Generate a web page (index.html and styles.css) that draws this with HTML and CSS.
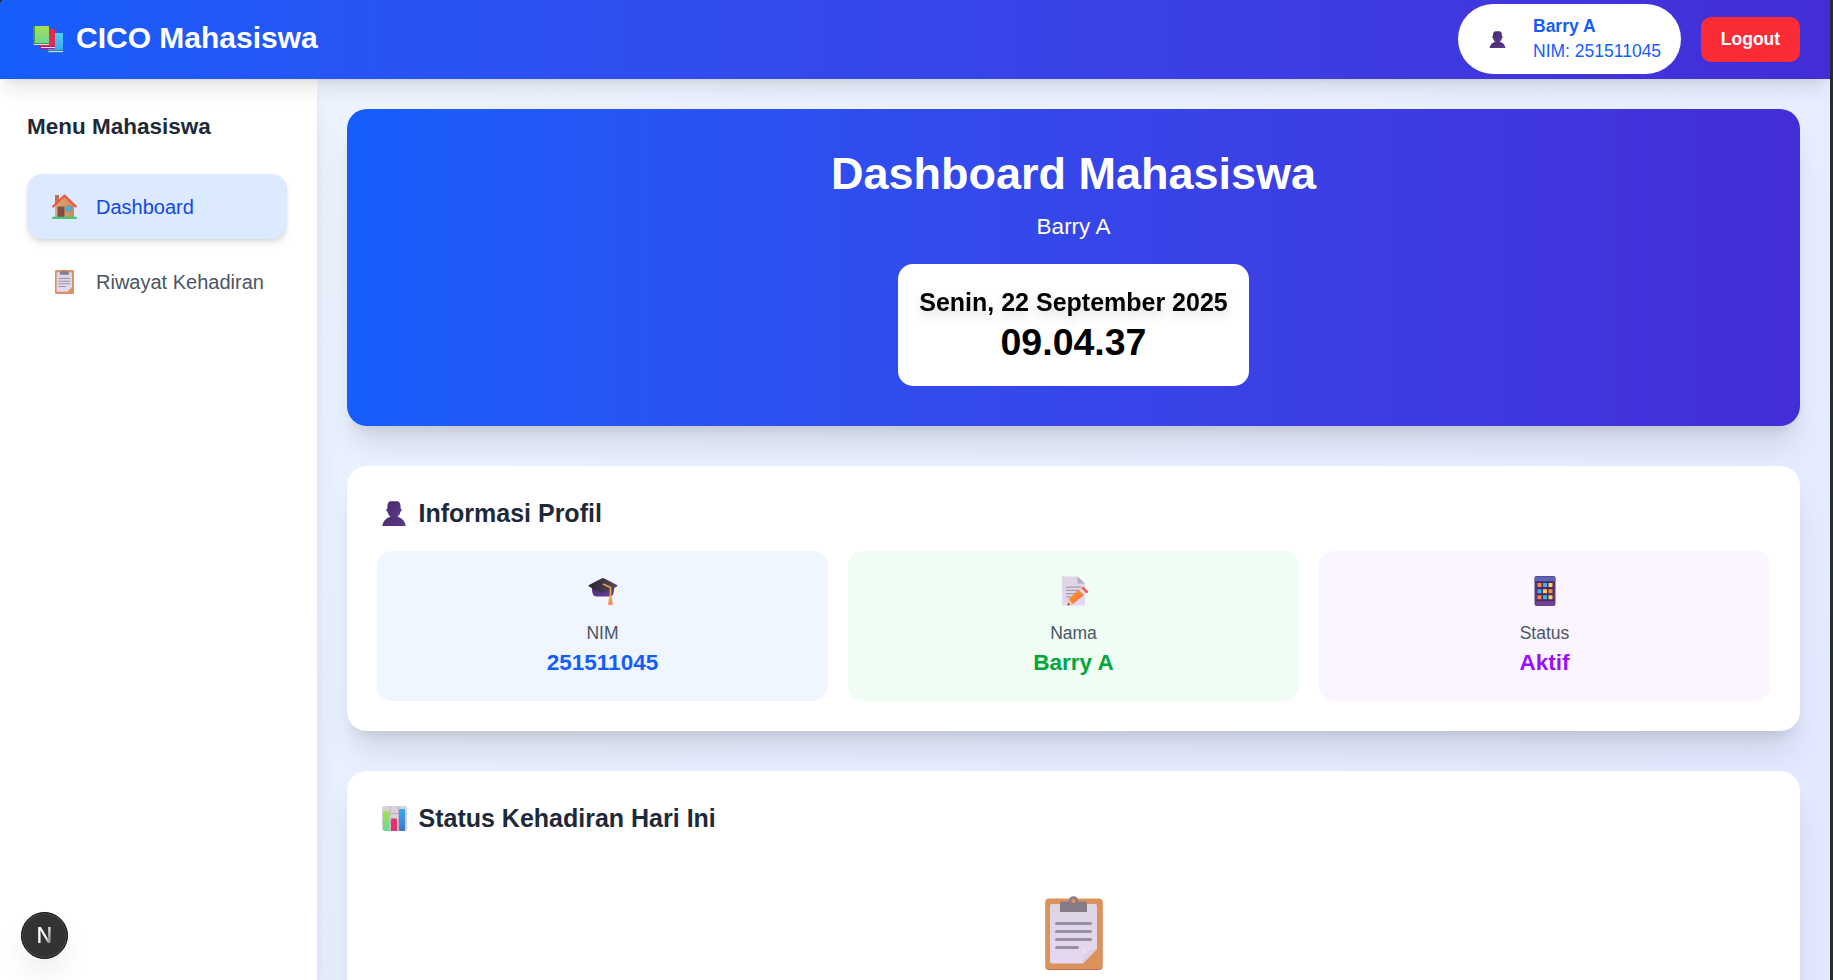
FILE: index.html
```html
<!DOCTYPE html>
<html lang="id">
<head>
<meta charset="utf-8">
<title>CICO Mahasiswa</title>
<link rel="stylesheet" href="styles.css">
</head>
<body>
<svg class="defs" width="0" height="0" aria-hidden="true">
  <defs>
    <linearGradient id="purple" x1="0" y1="0" x2="1" y2="1"><stop offset="0" stop-color="#432a63"/><stop offset="1" stop-color="#6a3fa6"/></linearGradient>
    <linearGradient id="person-fill" x1="0" y1="0" x2="1" y2="1"><stop offset="0" stop-color="#442b66"/><stop offset="1" stop-color="#60398f"/></linearGradient>
    <linearGradient id="paper" x1="0" y1="0" x2="0" y2="1"><stop offset="0" stop-color="#dcd5e3"/><stop offset="1" stop-color="#e5d8f2"/></linearGradient>
    <linearGradient id="fold" x1="0" y1="0" x2="1" y2="1"><stop offset="0" stop-color="#efe8f7"/><stop offset="1" stop-color="#b9adc6"/></linearGradient>
    <linearGradient id="green" x1="0" y1="0" x2="0" y2="1"><stop offset="0" stop-color="#a6df52"/><stop offset="1" stop-color="#6bd896"/></linearGradient>
    <linearGradient id="sky" x1="0" y1="0" x2="0" y2="1"><stop offset="0" stop-color="#4fd0f2"/><stop offset="1" stop-color="#38a8f5"/></linearGradient>
    <linearGradient id="blue" x1="0" y1="0" x2="0" y2="1"><stop offset="0" stop-color="#35aaf0"/><stop offset="1" stop-color="#3d78cf"/></linearGradient>
    <linearGradient id="pencil" x1="0" y1="0" x2="1" y2="1"><stop offset="0" stop-color="#ffa13d"/><stop offset="1" stop-color="#f4682f"/></linearGradient>
    <linearGradient id="wall" x1="0" y1="0" x2="1" y2="0"><stop offset="0" stop-color="#dfa878"/><stop offset="1" stop-color="#c98d58"/></linearGradient>
    <linearGradient id="tassel" x1="0" y1="0" x2="0" y2="1"><stop offset="0" stop-color="#edb63f"/><stop offset="1" stop-color="#ff7f55"/></linearGradient>
    <linearGradient id="capTop" x1="0" y1="0" x2="1" y2="0"><stop offset="0" stop-color="#292330"/><stop offset="1" stop-color="#5a4968"/></linearGradient>
    <linearGradient id="phone" x1="0" y1="0" x2="0" y2="1"><stop offset="0" stop-color="#45337c"/><stop offset="1" stop-color="#6d3c8e"/></linearGradient>
    <symbol id="person" viewBox="0 0 24 25">
      <path fill="url(#person-fill)" d="M.3 25C1 20 4.500 16.700 9 15.800H15C19.500 16.700 23 20 23.700 25Z"/>
      <path fill="url(#person-fill)" d="M5.400 7.500C5.200 2.500 6.500.3 9.500.3H14.500C17.500.3 18.800 2.500 18.600 7.500C20.100 7.700 20 10.300 18.400 10.500C18 14 15.500 16.800 12 16.800C8.500 16.800 6 14 5.600 10.500C4 10.300 3.900 7.700 5.400 7.500Z"/>
    </symbol>
    <symbol id="clip" viewBox="0 0 58 75">
      <rect x=".5" y="4" width="57" height="71" rx="3.500" fill="#c56a5e"/>
      <rect x=".5" y="3.500" width="57" height="70.500" rx="3.500" fill="#dc925b"/>
      <path fill="url(#paper)" d="M7 9h43q2 0 2 2v43L38 68.500H7q-2 0-2-2V11q0-2 2-2z"/>
      <path fill="url(#fold)" d="M52 54 37.500 68.500V56q0-2 2-2z"/>
      <g fill="#9a90a3"><rect x="10" y="27" width="37" height="3" rx="1.500"/><rect x="10" y="35" width="37" height="3" rx="1.500"/><rect x="10" y="43" width="37" height="3" rx="1.500"/><rect x="10" y="51" width="24" height="3" rx="1.500"/></g>
      <path fill="#877b88" fill-rule="evenodd" d="M15 17V9Q15 6.500 17.500 6.500H22.500Q24 6.500 24 5A4.600 4.600 0 0 1 33 5Q33 6.500 34.500 6.500H39.500Q42 6.500 42 9V17ZM28.500 3.700a2.200 2.200 0 1 0 0 4.400 2.200 2.200 0 1 0 0-4.400z"/>
    </symbol>
  </defs>
</svg>
<div class="screen">
  <header class="topbar">
    <div class="brand">
      <svg class="books" viewBox="0 0 31 27">
        <path fill="url(#sky)" d="M15 7h15v17H15z"/><path fill="#2680ba" d="M14.500 24H30v3H14.500z"/><path fill="#d8d0e5" d="M15.500 25H30v1H15.500z"/>
        <path fill="#df2a5c" d="M7 3h15v17H7z"/><path fill="#b51d63" d="M7 20h15v3H7z"/><path fill="#eddcf2" d="M8 21h14v1H8z"/>
        <path fill="url(#green)" d="M0 0h16v17H0z"/><path fill="#46953f" d="M0 0h2v19H0zM0 17h16v2H0z"/><path fill="#ded6e8" d="M1 18h15v1H1z"/>
      </svg>
      <span>CICO Mahasiswa</span>
    </div>
    <div class="account">
      <div class="pill">
        <svg class="pill-icon"><use href="#person"/></svg>
        <div class="pill-text"><strong>Barry A</strong><span>NIM: 251511045</span></div>
      </div>
      <button class="logout">Logout</button>
    </div>
  </header>
  <div class="body">
    <aside class="sidebar">
      <h3 class="menu-title">Menu Mahasiswa</h3>
      <nav class="menu">
        <a class="item active">
          <span class="item-icon"><svg class="house" viewBox="0 0 25 25">
            <path fill="#b9764b" d="M3 1h4v8H3z"/><path fill="url(#wall)" d="M12.500 2 22 11v12H3V11z"/>
            <path fill="#7d5049" d="M5.500 12.500h7V23h-7z"/><path fill="#5f3b3c" d="M11 17h1v1.500h-1z"/>
            <path fill="#3db4ee" stroke="#c77848" stroke-width=".6" d="M14 12h6v5.500h-6z"/>
            <path fill="none" stroke="#ee5546" stroke-width="2.200" stroke-linecap="round" stroke-linejoin="round" d="M1.200 12.500 12.500 1.600l11.300 10.900"/>
            <rect y="22.800" width="25" height="2.200" rx="1" fill="#46c578"/>
          </svg></span>
          <span class="item-text">Dashboard</span>
        </a>
        <a class="item">
          <span class="item-icon"><svg class="clip-small"><use href="#clip"/></svg></span>
          <span class="item-text">Riwayat Kehadiran</span>
        </a>
      </nav>
    </aside>
    <main class="main">
      <section class="hero">
        <h1>Dashboard Mahasiswa</h1>
        <p>Barry A</p>
        <div class="clock"><div class="date">Senin, 22 September 2025</div><div class="time">09.04.37</div></div>
      </section>
      <section class="card profile">
        <h2><svg class="head-icon"><use href="#person"/></svg>Informasi Profil</h2>
        <div class="tiles">
          <div class="tile tile-blue">
            <svg class="tile-icon" viewBox="0 0 30 30">
              <path fill="url(#purple)" d="M3.500 10.500h23l-1 6.500q-.5 3.500-4 3.500H8.500q-3 0-4-3.500z"/>
              <path fill="url(#capTop)" d="M14 2.300q1-.5 2 0l13 6.800q1 .700 0 1.400l-13 6.600q-1 .500-2 0L1 10.500q-1-.700 0-1.400z"/>
              <path fill="none" stroke="#e6a83b" stroke-width="1.700" stroke-linecap="round" stroke-linejoin="round" d="m15.500 8.300 7 3.200V21"/>
              <path fill="url(#tassel)" d="M21.300 20.500h2.400l1 7.500q0 1-1 1h-2.500q-1 0-1-1z"/>
            </svg>
            <span class="label">NIM</span><strong>251511045</strong>
          </div>
          <div class="tile tile-green">
            <svg class="tile-icon" viewBox="0 0 30 30">
              <path fill="url(#paper)" d="M3 .5H18.500l7.500 7v22H3z"/><path fill="#b5aac0" d="M18.500.5 26 7.500H19.500q-1 0-1-1z"/>
              <g fill="#a59dae"><path d="M7 10.500h15v1.200H7zM7 13.700h15v1.200H7zM7 17h12v1.200H7zM7 20.300h8v1.200H7z"/></g>
              <path fill="url(#pencil)" d="m19.500 13.500 5.500 5.500L14 28l-5.500 1.500L10 23z"/>
              <path fill="#f1cba2" d="m10 23.500 4 4.500-5.500 1.500z"/><path fill="#634c50" d="m9.200 26.800 2 2-2.700.7z"/>
              <path fill="#d8d5e5" d="m19.500 13.500 2.500-2 5.500 5.500-2.500 2z"/><path fill="#f65846" d="m22 11.800 1.800-.8q.7-.3 1.200.2l4 4q.600.600 0 1.200L27.500 17.300z"/>
            </svg>
            <span class="label">Nama</span><strong>Barry A</strong>
          </div>
          <div class="tile tile-purple">
            <svg class="tile-icon" viewBox="0 0 30 30">
              <rect x="4.500" width="21" height="30" rx="2" fill="url(#phone)"/>
              <path fill="#6064b5" d="M6.500.5h17q2 0 2 2V5h-21V2.500q0-2 2-2z"/><path fill="#4b2862" d="M7 6h16.500v19H7z"/><path fill="#724293" d="M5 26h20v3H5z"/>
              <g fill="#ff8946"><path d="M7.500 7h4v4h-4zM18.500 13.200h4v4h-4zM7.500 19.300h4v4h-4z"/></g>
              <g fill="#35b9f3"><path d="M13 7h4v4h-4zM7.500 13.200h4v4h-4zM13 19.300h4v4h-4z"/></g>
              <g fill="#ffd34e"><path d="M18.500 7h4v4h-4zM13 13.200h4v4h-4zM18.500 19.300h4v4h-4z"/></g>
            </svg>
            <span class="label">Status</span><strong>Aktif</strong>
          </div>
        </div>
      </section>
      <section class="card attendance">
        <h2><svg class="head-icon chart" viewBox="0 0 25 25">
          <rect width="25" height="25" rx="2.500" fill="#d8d0df"/><path stroke="#b3abbc" stroke-width=".8" d="M0 7.500h25M0 16.500h25M8 0v25M16.500 0v25"/>
          <path fill="url(#green)" d="M2 5h4q1.200 0 1.200 1.200V25H2.500Q1 24.500 1 23V6q0-1 1-1z"/><path fill="#e72f70" d="M10 12.500h4q1 0 1 1V25H9V13.500q0-1 1-1z"/><path fill="url(#blue)" d="M18 3h4q1 0 1 1v21h-6V4q0-1 1-1z"/>
        </svg>Status Kehadiran Hari Ini</h2>
        <svg class="clip-large"><use href="#clip"/></svg>
      </section>
    </main>
  </div>
</div>
<div class="window-edge"></div>
<div class="window-corner"></div>
<div class="devtools"><span>N</span></div>
</body>
</html>
```
FILE: styles.css
```css
* { box-sizing: border-box; }
body, h1, h2, h3, p { margin: 0; }
body {
  height: 980px;
  overflow: hidden;
  background: #fff;
  font-family: "Liberation Sans", Arial, sans-serif;
  font-size: 20px;
}
svg { display: block; }
.defs { position: absolute; }
.screen {
  display: flex;
  flex-direction: column;
  width: 1830px;
  height: 980px;
  overflow: hidden;
  background: linear-gradient(to bottom right in oklab, #eff6ff, #e0e7ff) 0 0 / 100% 1200px;
}
.topbar {
  position: relative;
  z-index: 2;
  flex: none;
  display: flex;
  justify-content: space-between;
  align-items: center;
  height: 79px;
  padding: 0 30px 1px 33px;
  color: #fff;
  background: linear-gradient(to right in oklab, #155dfc, #432dd7);
  box-shadow: 0 12.5px 18.75px -3.75px rgba(0, 0, 0, .1), 0 5px 7.5px -5px rgba(0, 0, 0, .1);
}
.brand { display: flex; align-items: center; gap: 12px; font-size: 30px; font-weight: 700; }
.brand span { padding-bottom: 2px; }
.books { width: 31px; height: 27px; }
.account { display: flex; align-items: center; gap: 20px; }
.pill {
  display: flex;
  align-items: center;
  width: 223px;
  height: 70px;
  padding-left: 31px;
  border-radius: 35px;
  background: #fff;
  color: #155dfc;
  font-size: 17.5px;
  line-height: 25px;
}
.pill-icon { width: 17px; height: 17px; margin-right: 27px; }
.pill-text { display: flex; flex-direction: column; white-space: nowrap; }
.logout {
  width: 99px;
  height: 45px;
  margin-top: 1px;
  padding: 0;
  border: 0;
  border-radius: 10px;
  background: #fb2c36;
  color: #fff;
  font: 700 17.5px "Liberation Sans", Arial, sans-serif;
}
.body { flex: 1; display: flex; min-height: 0; }
.sidebar {
  position: relative;
  z-index: 1;
  flex: none;
  width: 317px;
  padding: 30px 30px 0 27px;
  background: #fff;
  box-shadow: 0 25px 31.25px -6.25px rgba(0, 0, 0, .1), 0 10px 12.5px -7.5px rgba(0, 0, 0, .1);
}
.menu-title { margin-bottom: 30px; font-size: 22.5px; line-height: 35px; color: #1e2939; }
.menu { display: flex; flex-direction: column; gap: 10px; }
.item {
  display: flex;
  align-items: center;
  gap: 18px;
  height: 65px;
  padding-left: 23px;
  border-radius: 15px;
  color: #4a5565;
}
.item-icon { display: flex; justify-content: center; width: 28px; }
.item-text { padding-top: 2px; }
.active {
  background: #dbeafe;
  color: #1447e6;
  box-shadow: 0 5px 7.5px -1.25px rgba(0, 0, 0, .1), 0 2.5px 5px -2.5px rgba(0, 0, 0, .1);
}
.house { width: 25px; height: 25px; }
.clip-small { width: 19px; height: 25px; }
.main {
  flex: 1;
  display: flex;
  flex-direction: column;
  gap: 40px;
  padding: 30px 30px 0;
}
.hero, .card {
  flex: none;
  border-radius: 20px;
  box-shadow: 0 25px 31.25px -6.25px rgba(0, 0, 0, .1), 0 10px 12.5px -7.5px rgba(0, 0, 0, .1);
}
.hero {
  display: flex;
  flex-direction: column;
  align-items: center;
  height: 317px;
  padding-top: 40px;
  color: #fff;
  background: linear-gradient(to right in oklab, #155dfc, #432dd7);
}
.hero h1 { font-size: 45px; line-height: 50px; }
.hero p { margin-top: 10px; font-size: 22.5px; line-height: 35px; }
.clock {
  width: 351px;
  height: 122px;
  margin-top: 20px;
  padding-top: 21px;
  border-radius: 15px;
  background: #fff;
  color: #000;
  font-weight: 700;
  text-align: center;
}
.date { font-size: 25px; line-height: 35px; filter: drop-shadow(0 5px 5px rgba(0, 0, 0, .15)); }
.time { font-size: 37.5px; line-height: 45px; }
.card { padding: 30px; background: #fff; }
.profile { height: 265px; }
.card h2 {
  display: flex;
  align-items: center;
  height: 35px;
  padding-left: 5px;
  font-size: 25px;
  color: #1e2939;
}
.head-icon { width: 24px; height: 25px; margin-right: 12.5px; }
.chart { width: 25px; margin-right: 11.5px; }
.tiles { display: grid; grid-template-columns: repeat(3, 1fr); gap: 20px; margin-top: 20px; }
.tile {
  display: flex;
  flex-direction: column;
  align-items: center;
  height: 150px;
  padding-top: 25px;
  border-radius: 15px;
}
.tile-icon { width: 30px; height: 30px; }
.label { margin-top: 15px; font-size: 17.5px; line-height: 25px; color: #4a5565; }
.tile strong { font-size: 22.5px; line-height: 34px; }
.tile-blue { background: #eff6ff; color: #155dfc; }
.tile-green { background: #f0fdf4; color: #00a63e; }
.tile-purple { background: #faf5ff; color: #9810fa; }
.attendance { height: 400px; }
.clip-large { width: 58px; height: 75px; margin: 59px auto 0; }
.window-edge { position: absolute; top: 0; right: 0; width: 3px; height: 980px; background: #292d2c; }
.window-corner { position: absolute; z-index: 3; top: 0; left: 0; width: 5px; height: 5px; background: radial-gradient(circle at 100% 100%, transparent 5px, #2a2e38 5.5px); }
.devtools {
  position: absolute;
  z-index: 3;
  left: 21px;
  top: 912px;
  display: flex;
  align-items: center;
  justify-content: center;
  width: 47px;
  height: 47px;
  border-radius: 50%;
  background: #333;
  border: 1px solid #0a0a0a;
  box-shadow: inset 0 0 0 1px #4b4b4b, 0 16px 32px -8px rgba(0, 0, 0, .14);
}
.devtools span {
  font: 500 21px "Inter", sans-serif;
  color: transparent;
  background: linear-gradient(105deg, #fff 58%, #777 85%);
  -webkit-background-clip: text;
  background-clip: text;
}
```
